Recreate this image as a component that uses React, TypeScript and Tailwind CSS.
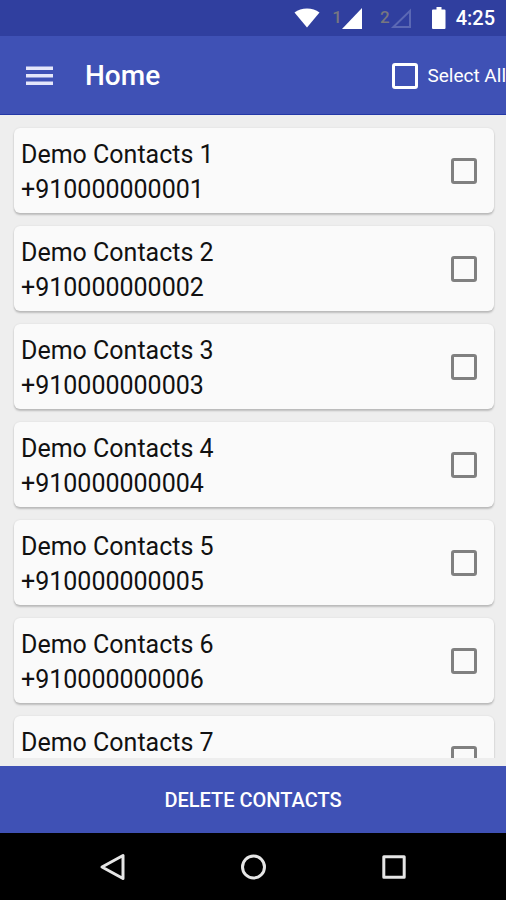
import React, { useState } from 'react';

const contacts = [
  { id: 1, name: 'Demo Contacts 1', phone: '+910000000001' },
  { id: 2, name: 'Demo Contacts 2', phone: '+910000000002' },
  { id: 3, name: 'Demo Contacts 3', phone: '+910000000003' },
  { id: 4, name: 'Demo Contacts 4', phone: '+910000000004' },
  { id: 5, name: 'Demo Contacts 5', phone: '+910000000005' },
  { id: 6, name: 'Demo Contacts 6', phone: '+910000000006' },
  { id: 7, name: 'Demo Contacts 7', phone: '+910000000007' },
];

function StatusBar() {
  return (
    <div className="flex h-9 shrink-0 items-center justify-end bg-[#303f9f] pr-[11px] text-white">
      <svg className="mr-3 h-5 w-[26px]" viewBox="0 0 26 20" fill="currentColor">
        <path d="M13 19.5 L0.5 4.5 C4 1.8 8.2 0.5 13 0.5 C17.8 0.5 22 1.8 25.5 4.5 Z" />
      </svg>
      <span className="text-[17px] font-medium text-[#77777f]">1</span>
      <svg className="mr-4 h-[21px] w-[22px]" viewBox="0 0 22 21" fill="currentColor">
        <path d="M0 21 L20 0 V21 Z" />
      </svg>
      <span className="text-[17px] font-medium text-[#77777f]">2</span>
      <svg className="mr-5 h-[21px] w-[22px] text-[#5b68b4]" viewBox="0 0 22 21" fill="none" stroke="currentColor" strokeWidth="2">
        <path d="M3.4 19 L20 2.9 V19 Z" />
      </svg>
      <svg className="mr-2 h-[22px] w-4" viewBox="0 0 16 22" fill="currentColor">
        <path d="M4.5 0 H9.5 V2.5 H12.5 Q13.5 2.5 13.5 3.5 V21 Q13.5 22 12.5 22 H1 Q0 22 0 21 V3.5 Q0 2.5 1 2.5 H4.5 Z" />
      </svg>
      <span className="text-xl font-medium">4:25</span>
    </div>
  );
}

export default function App() {
  const [selected, setSelected] = useState<number[]>([]);
  const allSelected = selected.length === contacts.length;

  const toggle = (id: number) => {
    setSelected((prev) => (prev.includes(id) ? prev.filter((x) => x !== id) : [...prev, id]));
  };

  return (
    <div className="flex h-screen flex-col overflow-hidden bg-[#eeeeee] font-['Roboto',sans-serif]">
      <StatusBar />

      <header className="flex h-[79px] shrink-0 items-center border-b border-[#2438a6] bg-[#3f51b5] pt-0.5 pl-[26px] text-white">
        <button type="button" aria-label="Open menu" className="mr-8">
          <svg className="block h-5 w-[27px]" viewBox="0 0 27 20" fill="#e4e6fa">
            <rect y="0.5" width="27" height="3.5" />
            <rect y="8" width="27" height="3.5" />
            <rect y="15.5" width="27" height="3.5" />
          </svg>
        </button>
        <h1 className="text-[28px] font-medium">Home</h1>
        <label className="ml-auto flex items-center gap-[9px] text-[19px] whitespace-nowrap">
          <input
            type="checkbox"
            checked={allSelected}
            onChange={() => setSelected(allSelected ? [] : contacts.map((c) => c.id))}
            className="size-[26px] appearance-none rounded-[3px] border-3 border-white checked:bg-white"
          />
          Select All
        </label>
      </header>

      <main className="min-h-0 flex-1 overflow-hidden px-3 pt-[13px]">
        <ul className="flex flex-col gap-[13px]">
          {contacts.map((contact) => (
            <li key={contact.id}>
              <label className="ml-0.5 flex items-center justify-between rounded-md bg-[#fafafa] pr-[17px] pl-[7px] shadow-[0_2px_2px_rgba(0,0,0,0.2),0_0_2px_rgba(0,0,0,0.1)]">
                <span className="pt-[9px] pb-1.5 text-[25px] leading-[35px] text-[#111111]">
                  <span className="block">{contact.name}</span>
                  <span className="block">{contact.phone}</span>
                </span>
                <input
                  type="checkbox"
                  checked={selected.includes(contact.id)}
                  onChange={() => toggle(contact.id)}
                  className="size-[26px] appearance-none rounded-[3px] border-3 border-[#808080] checked:bg-[#3f51b5]"
                />
              </label>
            </li>
          ))}
        </ul>
      </main>

      <button
        type="button"
        className="mt-2 h-[67px] shrink-0 bg-[#3f51b5] text-xl font-medium text-white uppercase"
      >
        Delete Contacts
      </button>

      <nav className="flex h-[67px] shrink-0 items-center justify-center gap-[113px] bg-black text-[#e6e6e6]">
        <button type="button" aria-label="Back">
          <svg className="block size-7" viewBox="0 0 28 28" fill="none" stroke="currentColor" strokeWidth="3" strokeLinejoin="round">
            <path d="M25 2.5 V25.5 L4 14 Z" />
          </svg>
        </button>
        <button type="button" aria-label="Home">
          <svg className="block size-7" viewBox="0 0 28 28" fill="none" stroke="currentColor" strokeWidth="3">
            <circle cx="14.5" cy="14" r="11" />
          </svg>
        </button>
        <button type="button" aria-label="Recent apps">
          <svg className="block size-7" viewBox="0 0 28 28" fill="none" stroke="currentColor" strokeWidth="3" strokeLinejoin="round">
            <rect x="3.8" y="3.8" width="20.4" height="20.4" />
          </svg>
        </button>
      </nav>
    </div>
  );
}
